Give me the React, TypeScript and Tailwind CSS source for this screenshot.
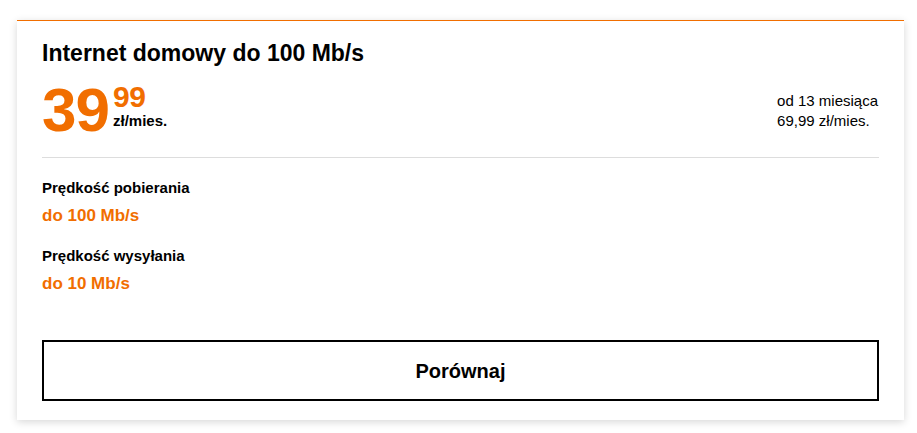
const speeds = [
  { label: 'Prędkość pobierania', value: 'do 100 Mb/s' },
  { label: 'Prędkość wysyłania', value: 'do 10 Mb/s' },
]

export default function App() {
  return (
    <div className="min-h-[433px] bg-white pt-[20px] pl-[17px] font-['Liberation_Sans',Arial,sans-serif] text-black">
      <div className="w-[887px] border-t border-[#f16e00] bg-white px-[25px] pt-[18px] pb-[19px] shadow-[0_2px_8px_rgba(0,0,0,0.16)]">
        <h2 className="text-[23px] font-bold leading-[28px]">Internet domowy do 100 Mb/s</h2>

        <div className="mt-[12px] flex items-start justify-between border-b border-[#dddddd] pb-[16px]">
          <div className="flex items-start">
            <span className="text-[62px] font-bold leading-none tracking-[-1px] text-[#f16e00]">39</span>
            <div className="ml-[4px] flex flex-col">
              <span className="mt-[3px] text-[30px] font-bold leading-none tracking-[-0.5px] text-[#f16e00]">99</span>
              <span className="mt-[1px] text-[15px] font-bold leading-[16px]">zł/mies.</span>
            </div>
          </div>
          <div className="mt-[12px] mr-[1px] text-[15px] leading-[20px]">
            <div>od 13 miesiąca</div>
            <div>69,99 zł/mies.</div>
          </div>
        </div>

        <div className="mt-[20px] flex flex-col gap-[18px]">
          {speeds.map(s => (
            <div key={s.label}>
              <div className="text-[15px] font-bold leading-[20px]">{s.label}</div>
              <div className="mt-[6px] text-[17px] font-bold leading-[24px] text-[#f16e00]">{s.value}</div>
            </div>
          ))}
        </div>

        <button className="mt-[44px] flex h-[61px] w-full items-center justify-center border-2 border-black bg-white text-[20px] font-bold">
          Porównaj
        </button>
      </div>
    </div>
  )
}
